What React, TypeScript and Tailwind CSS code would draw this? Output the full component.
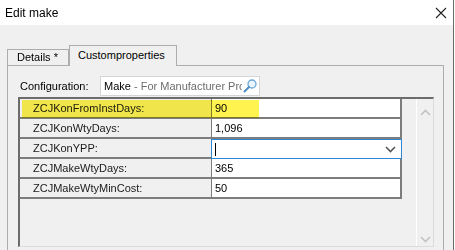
const rows = [
  { label: 'ZCJKonFromInstDays:', value: '90' },
  { label: 'ZCJKonWtyDays:', value: '1,096' },
  { label: 'ZCJKonYPP:', value: '', editing: true },
  { label: 'ZCJMakeWtyDays:', value: '365' },
  { label: 'ZCJMakeWtyMinCost:', value: '50' },
];

function Chevron({ dir, className }: { dir: 'up' | 'down'; className?: string }) {
  return (
    <svg width="11" height="7" viewBox="0 0 11 7" className={className}>
      <path
        d={dir === 'up' ? 'M1 6l4.5-4.5L10 6' : 'M1 1l4.5 4.5L10 1'}
        fill="none"
        stroke="currentColor"
        strokeWidth="1.6"
      />
    </svg>
  );
}

export default function App() {
  return (
    <div
      className="w-[454px] h-[250px] overflow-hidden border-r border-[#6a6a6a] bg-[#f0f0f0] text-black"
      style={{ fontFamily: '"Liberation Sans", Arial, sans-serif' }}
    >
      {/* Title bar */}
      <div className="flex h-[25px] items-center justify-between bg-white pl-[5px] pr-[6px]">
        <span className="text-[12px] leading-none">Edit make</span>
        <svg width="12" height="12" viewBox="0 0 12 12">
          <path d="M1 1l10 10M11 1L1 11" stroke="#222" strokeWidth="1.1" />
        </svg>
      </div>

      {/* Tabs */}
      <div className="mt-[20px] flex items-end pl-[7px] text-[11px]">
        <div className="flex h-[16px] w-[62px] items-center border border-b-0 border-[#adadad] bg-[#f0f0f0] pl-[9px] leading-none">
          Details *
        </div>
        <div className="relative z-10 -mb-px flex h-[21px] w-[108px] items-center border border-b-0 border-[#adadad] bg-[#f0f0f0] pl-[8px] pb-[2px] leading-none">
          Customproperties
        </div>
      </div>

      {/* Tab panel */}
      <div className="ml-[7px] h-[200px] w-[437px] border border-[#adadad] bg-[#f0f0f0]">
        <div className="flex items-center pl-[12px] pt-[10px]">
          <span className="w-[80px] text-[11px]">Configuration:</span>
          <div className="flex h-[20px] w-[160px] items-center overflow-hidden border border-[#d5d5d5] bg-white pl-[3px]">
            <span className="flex-1 overflow-hidden whitespace-nowrap text-[11px]">
              Make <span className="text-[#6d6d6d]">- For Manufacturer Properties</span>
            </span>
            <svg width="16" height="16" viewBox="0 0 16 16" className="mr-[1px] shrink-0 bg-white">
              <circle cx="10" cy="6" r="4" fill="#eaf4fc" stroke="#6aa6d8" strokeWidth="1.3" />
              <path d="M7 9l-4.5 4.5" stroke="#4d8cc4" strokeWidth="2" strokeLinecap="round" />
            </svg>
          </div>
        </div>

        {/* Property grid */}
        <div className="relative ml-[10px] mt-px flex h-[150px] w-[416px] border-l-2 border-t-2 border-b border-r border-[#6c6c6c] border-b-[#dcdcdc] border-r-[#dcdcdc] bg-[#f0f0f0]">
          <div className="w-[382px] text-[11px]">
            {rows.map((r) => (
              <div key={r.label} className="flex h-[20px]">
                <div className="flex w-[191px] items-center border-b-2 border-[#7d7d7d] pl-[13px] text-[#1a1a1a]">
                  {r.label}
                </div>
                {r.editing ? (
                  <div className="flex flex-1 items-center justify-between border border-[#2f86d3] bg-white pl-[3px] pr-[5px]">
                    <span className="h-[13px] w-px bg-black" />
                    <Chevron dir="down" className="text-[#555]" />
                  </div>
                ) : (
                  <div className="flex flex-1 items-center border-b-2 border-l border-r-2 border-[#7d7d7d] bg-white pl-[3px]">
                    {r.value}
                  </div>
                )}
              </div>
            ))}
          </div>
          <div className="ml-[14px] flex w-[17px] flex-col items-center justify-between border-l border-white pb-[3px] pt-[10px] text-[#c2c2c2]">
            <Chevron dir="up" />
            <Chevron dir="down" />
          </div>
          <div className="pointer-events-none absolute left-[2px] top-[1px] h-[18px] w-[237px] bg-[#fff44f] mix-blend-multiply" />
        </div>
      </div>
    </div>
  );
}
